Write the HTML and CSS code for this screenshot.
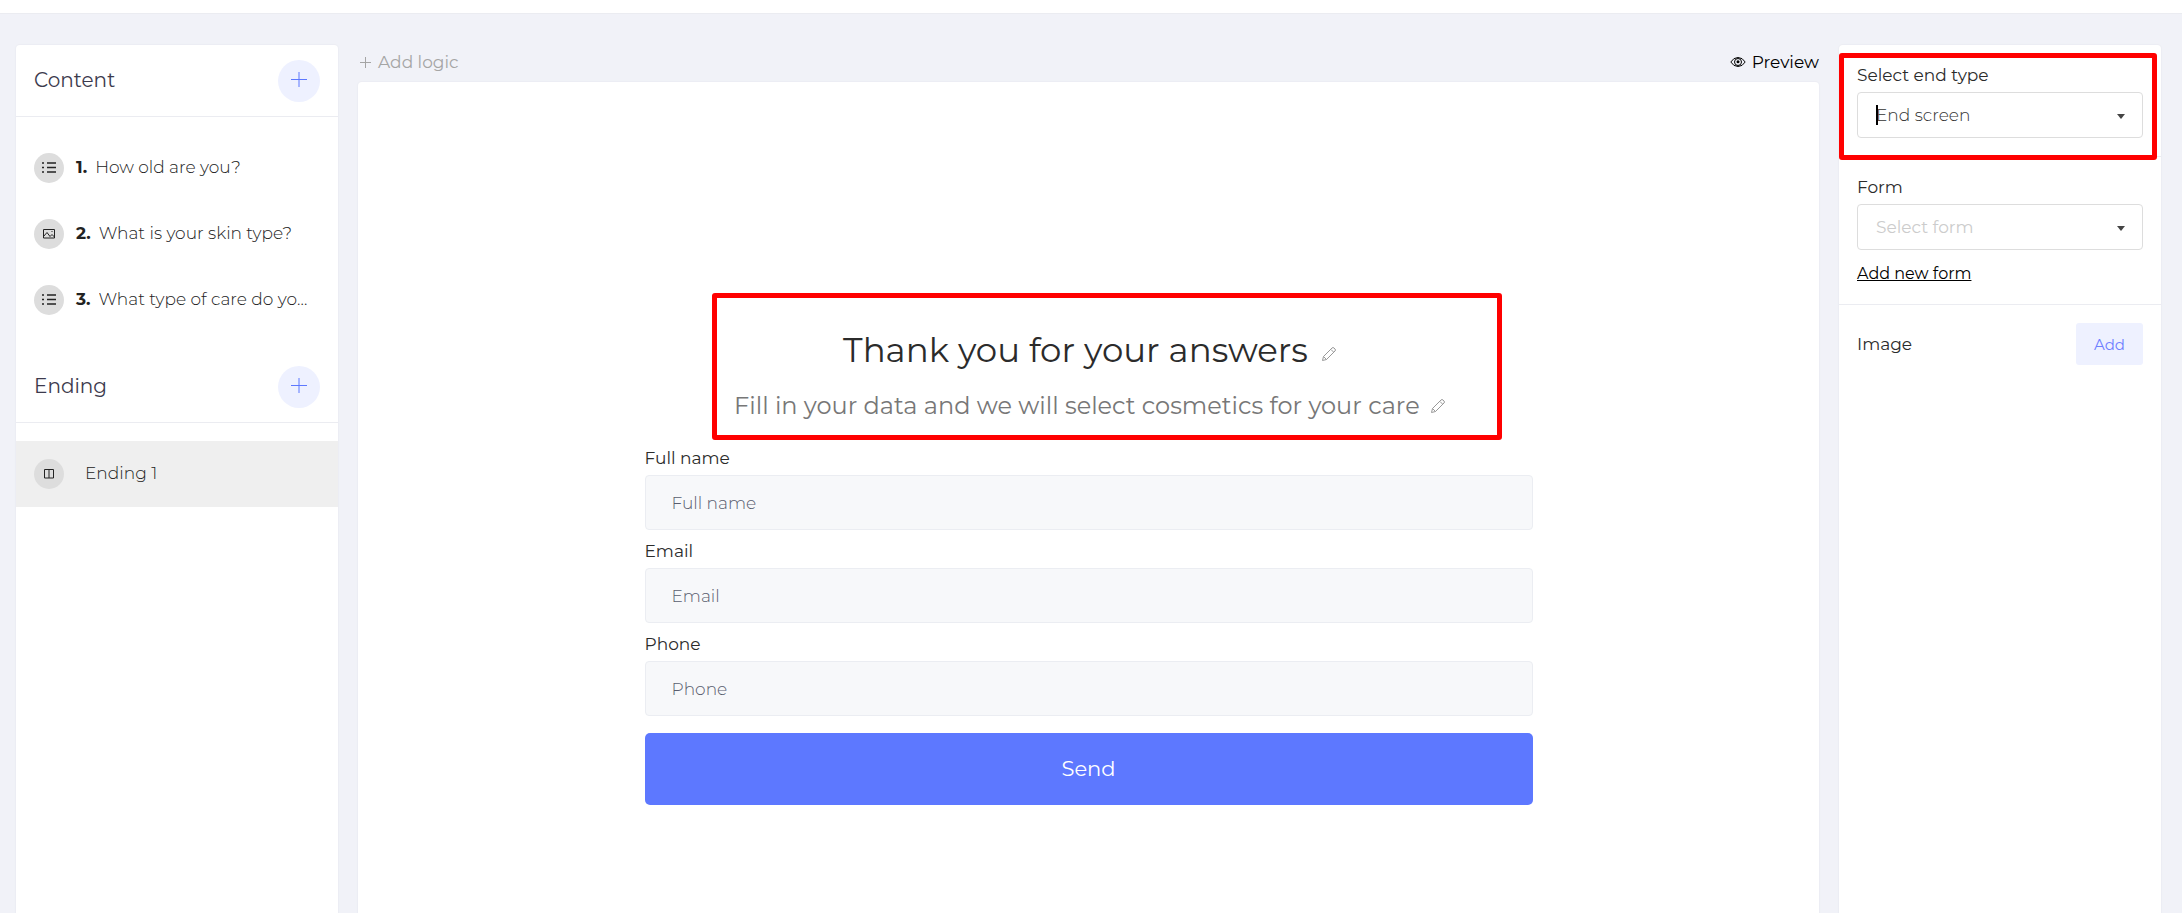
FILE: index.html
```html
<!DOCTYPE html>
<html lang="en">
  <head>
    <meta charset="utf-8">
    <title>Quiz builder - Ending</title>
    <link rel="stylesheet" href="styles.css">
  </head>
  <body>
    <header class="topbar"></header>

    <div class="layout">
      <!-- Left column: questions and endings -->
      <aside class="panel">
        <div class="panel-head">
          <h2>Content</h2>
          <button class="round-btn" type="button" aria-label="Add question">
            <svg viewBox="0 0 42 42"><path d="M13 19.500h16M21 12v15"/></svg>
          </button>
        </div>
        <ul class="items">
          <li class="item">
            <span class="item-icon">
              <svg class="icon-list" viewBox="0 0 14 12"><path d="M0 1h2M0 5.500h2M0 10h2M5 1h9M5 5.500h9M5 10h9"/></svg>
            </span>
            <b>1.</b>
            <span class="item-text">How old are you?</span>
          </li>
          <li class="item">
            <span class="item-icon">
              <svg class="icon-line" viewBox="0 0 14 12"><path d="M1.500 1.500h11v8.500h-11zM1.500 8.500l3.500-4 3 4 2-2 2.500 2.500M9.500 3.500h1"/></svg>
            </span>
            <b>2.</b>
            <span class="item-text">What is your skin type?</span>
          </li>
          <li class="item">
            <span class="item-icon">
              <svg class="icon-list" viewBox="0 0 14 12"><path d="M0 1h2M0 5.500h2M0 10h2M5 1h9M5 5.500h9M5 10h9"/></svg>
            </span>
            <b>3.</b>
            <span class="item-text">What type of care do you use?</span>
          </li>
        </ul>

        <div class="panel-head">
          <h2>Ending</h2>
          <button class="round-btn" type="button" aria-label="Add ending">
            <svg viewBox="0 0 42 42"><path d="M13 19.500h16M21 12v15"/></svg>
          </button>
        </div>
        <ul class="items">
          <li class="item item-ending active">
            <span class="item-icon">
              <svg class="icon-line" viewBox="0 0 14 12"><path d="M2.500 1.500h9v8.500h-9zM7 1.500v8.500"/></svg>
            </span>
            <span class="item-text">Ending 1</span>
          </li>
        </ul>
      </aside>

      <!-- Center column: preview of the end screen -->
      <main class="center">
        <div class="toolbar">
          <button class="tool-btn muted" type="button">
            <svg class="icon-plus" viewBox="0 0 13 13"><path d="M1 6.500h11M6.500 1v11"/></svg>
            Add logic
          </button>
          <button class="tool-btn" type="button">
            <svg class="icon-eye" viewBox="0 0 16 12"><path d="M.8 6Q3.500 1.500 8 1.500T15.200 6Q12.500 10.500 8 10.500T.8 6z"/><circle cx="8" cy="6" r="3.500"/><circle class="pupil" cx="8" cy="5.700" r="1.500"/></svg>
            Preview
          </button>
        </div>
        <section class="canvas">
          <form class="end-form">
            <div class="heading">
              <h1>Thank you for your answers
                <svg class="icon-edit" viewBox="0 0 16 16"><path d="M1.500 14.500l1-4L11 2q1-1 2 0l1 1q1 1 0 2l-8.500 8.500zM10 3.500l2.500 2.500M2.500 10.500l3 3"/></svg>
              </h1>
              <p>Fill in your data and we will select cosmetics for your care
                <svg class="icon-edit" viewBox="0 0 16 16"><path d="M1.500 14.500l1-4L11 2q1-1 2 0l1 1q1 1 0 2l-8.500 8.500zM10 3.500l2.500 2.500M2.500 10.500l3 3"/></svg>
              </p>
              <div class="mark mark-heading"></div>
            </div>
            <div class="field">
              <label for="name">Full name</label>
              <input type="text" id="name" placeholder="Full name">
            </div>
            <div class="field">
              <label for="email">Email</label>
              <input type="email" id="email" placeholder="Email">
            </div>
            <div class="field">
              <label for="phone">Phone</label>
              <input type="tel" id="phone" placeholder="Phone">
            </div>
            <button class="send" type="button">Send</button>
          </form>
        </section>
      </main>

      <!-- Right column: settings -->
      <aside class="panel">
        <div class="setting">
          <label for="end-type">Select end type</label>
          <div class="select">
            <select id="end-type">
              <option>End screen</option>
            </select>
            <span class="caret"></span>
          </div>
          <div class="mark mark-type"></div>
        </div>
        <div class="setting">
          <label for="form">Form</label>
          <div class="select">
            <select id="form" class="empty">
              <option>Select form</option>
            </select>
          </div>
          <a class="new-form" href="#">Add new form</a>
        </div>
        <div class="setting setting-row">
          <span>Image</span>
          <button class="add-btn" type="button">Add</button>
        </div>
      </aside>
    </div>
  </body>
</html>
```

FILE: styles.css
```css
* {
  box-sizing: border-box;
}

body {
  margin: 0;
  min-height: 100vh;
  display: flex;
  flex-direction: column;
  background: #f1f2f8;
  color: #2b2b2b;
  font-family: Montserrat, Inter, sans-serif;
  font-size: 17px;
  line-height: 24px;
}

h1, h2, p, ul {
  margin: 0;
  padding: 0;
  font-weight: 400;
}

button, input, select {
  font-family: inherit;
  font-size: inherit;
}

button {
  border: 0;
  padding: 0;
  cursor: pointer;
}

svg {
  fill: none;
  stroke: currentColor;
}

.topbar {
  height: 14px;
  background: #fff;
  border-bottom: 1px solid #ebecf1;
}

.layout {
  flex: 1;
  display: grid;
  grid-template-columns: 322px 1fr 322px;
  gap: 20px;
  padding: 31px 21px 0 16px;
}

.panel, .canvas {
  background: #fff;
  border-radius: 4px 4px 0 0;
  box-shadow: 0 0 1px 1px #ecedf3;
}

/* Left column */
.panel-head {
  display: flex;
  align-items: center;
  justify-content: space-between;
  height: 72px;
  padding: 0 18px;
  border-bottom: 1px solid #ebecf1;
}

.panel-head h2 {
  padding-bottom: 2px;
  color: #3c3a4d;
  font-size: 20px;
}

.round-btn {
  width: 42px;
  height: 42px;
  border-radius: 50%;
  background: #eef1ff;
  color: #5d78ff;
}

.round-btn svg {
  display: block;
}

.items {
  padding: 18px 0;
  list-style: none;
}

.item {
  display: flex;
  align-items: center;
  height: 66px;
  padding: 0 26px 0 18px;
  color: #222;
}

.item b {
  margin: 0 8px 0 12px;
  padding-bottom: 2px;
}

.item-icon {
  flex: none;
  display: flex;
  align-items: center;
  justify-content: center;
  width: 30px;
  height: 30px;
  border-radius: 50%;
  background: #ddd;
}

.item-icon svg {
  width: 14px;
  height: 12px;
}

.icon-list {
  stroke-width: 1.6;
}

.item-text {
  padding-bottom: 2px;
  overflow: hidden;
  text-overflow: ellipsis;
  white-space: nowrap;
  font-weight: 300;
}

.item-ending .item-text {
  margin-left: 21px;
}

.active {
  background: #efefef;
}

/* Center column */
.center {
  display: flex;
  flex-direction: column;
}

.toolbar {
  display: flex;
  justify-content: space-between;
  height: 37px;
  padding: 0 0 3px 1px;
}

.tool-btn {
  display: flex;
  align-items: center;
  gap: 6px;
  background: none;
  color: #000;
}

.tool-btn.muted {
  color: #a5a5a5;
}

.icon-plus {
  width: 13px;
  height: 13px;
}

.icon-eye {
  width: 16px;
  height: 12px;
}

.pupil {
  fill: currentColor;
  stroke: none;
}

.canvas {
  flex: 1;
  padding: 244px 20px 40px;
}

.end-form {
  max-width: 888px;
  margin: 0 auto;
}

.heading {
  position: relative;
  margin-bottom: 22px;
  padding-left: 3px;
  text-align: center;
}

.heading h1 {
  margin-bottom: 14px;
  font-size: 34px;
  line-height: 48px;
}

.heading p {
  color: #777;
  font-size: 24px;
  line-height: 36px;
}

.icon-edit {
  width: 16px;
  height: 16px;
  margin-left: 4px;
  color: #999;
}

/* Red frames over the highlighted parts */
.mark {
  position: absolute;
  border: 5px solid #f00;
  border-radius: 3px;
  pointer-events: none;
}

.mark-heading {
  inset: -33px 31px -16px 67px;
}

.mark-type {
  inset: 8px 4px -4px 0;
}

.field {
  margin-bottom: 9px;
}

.field label, .setting label {
  display: block;
  margin-bottom: 5px;
}

.field input {
  display: block;
  width: 100%;
  height: 55px;
  padding: 0 26px;
  border: 1px solid #ebedf2;
  border-radius: 4px;
  background: #f7f8fa;
  font-weight: 300;
}

.field input::placeholder {
  color: #595d6e;
}

.send {
  width: 100%;
  height: 72px;
  margin-top: 8px;
  padding-bottom: 2px;
  border-radius: 5px;
  background: #5d78ff;
  color: #fff;
  font-size: 21px;
}

/* Right column */
.setting {
  position: relative;
  padding: 18px;
  border-bottom: 1px solid #ebecf1;
}

.setting:last-child {
  border-bottom: 0;
}

.select {
  position: relative;
}

.select select {
  display: block;
  width: 100%;
  height: 46px;
  padding: 0 18px;
  border: 1px solid #ddd;
  border-radius: 4px;
  background: #fff;
  color: #333;
  font-weight: 300;
  appearance: none;
}

.select select.empty {
  color: #ccc;
  font-weight: 400;
}

.select::after {
  content: "";
  position: absolute;
  top: 22px;
  right: 18px;
  border: 4px solid transparent;
  border-top: 5px solid #444;
  border-bottom: 0;
}

.caret {
  position: absolute;
  top: 13px;
  left: 19px;
  width: 2px;
  height: 20px;
  background: #000;
}

.new-form {
  display: block;
  width: fit-content;
  margin-top: 12px;
  color: #000;
  font-size: 16px;
}

.setting-row {
  display: flex;
  align-items: center;
  justify-content: space-between;
}

.add-btn {
  width: 67px;
  height: 42px;
  border-radius: 3px;
  background: #eef1ff;
  color: #6f80ff;
  font-size: 15px;
}
```
